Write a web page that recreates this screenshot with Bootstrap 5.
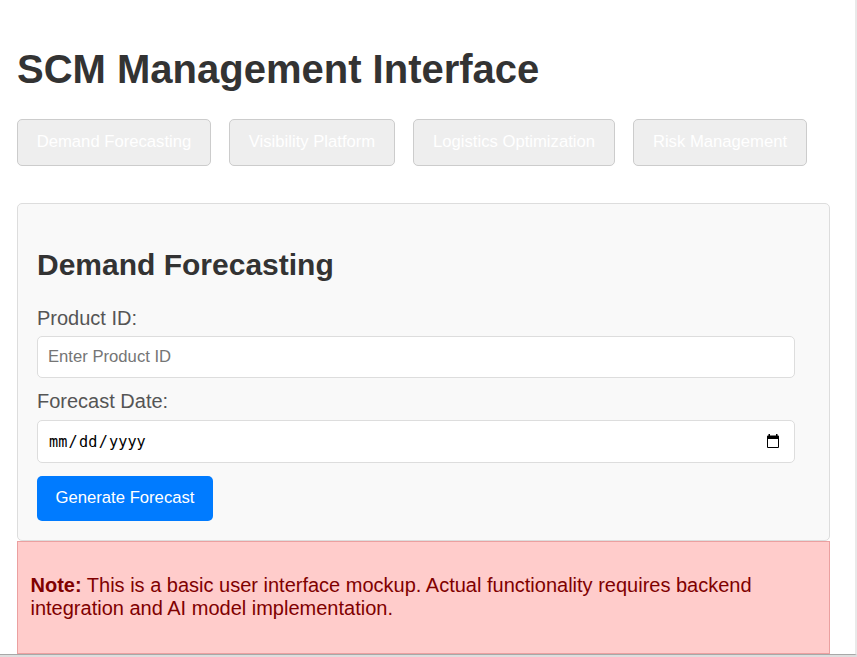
<!DOCTYPE html>
<html lang="en">
<head>
<meta charset="utf-8">
<meta name="viewport" content="width=device-width, initial-scale=1">
<title>SCM Management Interface</title>
<link href="https://cdn.jsdelivr.net/npm/bootstrap@5.3.0/dist/css/bootstrap.min.css" rel="stylesheet">
<style>
body{font-family:"Liberation Sans",Arial,sans-serif;font-size:20px;line-height:23px;color:#333;background:#fff}
.window{height:657px;border-bottom:2px solid #dedede}
.view{border-right:2px solid #e9e9e9;border-bottom:1px solid #a8a8a8;padding:46px 25px 0 17px}
h1{font-size:40px;line-height:46px;font-weight:700;color:#333}
h2{font-size:30px;line-height:36px;font-weight:700;color:#333}
.tabs{gap:18px;margin-top:27px}
.tabs .btn{height:47px;font-size:16.67px;line-height:19px;padding:0 0 3px;color:#fff;background:#eee;border:1px solid #ccc;border-radius:5px}
.w1{width:194px}.w2{width:166px}.w3{width:202px}.w4{width:174px}
.panel{height:338px;margin-top:37px;padding:43px 34px 0 19px;background:#f9f9f9;border:1px solid #ddd;border-radius:5px}
.panel label{color:#555;line-height:23px}
.panel .form-control{height:42px;font-size:16.67px;line-height:20px;padding:0 10px;border:1px solid #ddd;border-radius:5px;color:#000;background:#fff}
.form-control::placeholder{color:#757575}
.panel #product{margin-top:6px}
.panel .date-field{height:43px;margin-top:7px;padding:0 14px 0 11px}
.mono{font-family:"DejaVu Sans Mono",monospace;font-size:15.2px;gap:1.3px}
.btn-forecast{width:176px;height:45px;margin-top:13px;font-size:16.67px;line-height:19px;padding:0 0 3px;border:0;border-radius:5px;color:#fff;background:#007bff}
.note{height:113px;padding:32px 13px 0 12.5px;border:1px solid #eba0a0;background:#ffcccb;color:#800000}
</style>
</head>
<body>
<div class="window d-flex flex-column overflow-hidden">
  <main class="view flex-grow-1">
    <h1 class="m-0">SCM Management Interface</h1>
    <nav class="tabs d-flex">
      <button type="button" class="btn w1">Demand Forecasting</button>
      <button type="button" class="btn w2">Visibility Platform</button>
      <button type="button" class="btn w3">Logistics Optimization</button>
      <button type="button" class="btn w4">Risk Management</button>
    </nav>
    <section class="panel">
      <h2 class="m-0">Demand Forecasting</h2>
      <label class="d-block mt-4" for="product">Product ID:</label>
      <input id="product" type="text" class="form-control" placeholder="Enter Product ID">
      <label class="d-block mt-2 pt-1" for="forecast-date">Forecast Date:</label>
      <div id="forecast-date" class="form-control date-field d-flex align-items-center justify-content-between" tabindex="0">
        <span class="mono d-flex"><span>mm</span><span>/</span><span>dd</span><span>/</span><span>yyyy</span></span>
        <svg width="14" height="15" viewBox="0 0 14 15" aria-hidden="true"><path d="M2.5 0h1.500v1.500h6V0h1.500v1.500H12q1 0 1 1V13q0 1-1 1H2q-1 0-1-1V2.500q0-1 1-1h.5zM2 5v8h10V5z" fill="#000" fill-rule="evenodd"/></svg>
      </div>
      <button type="button" class="btn btn-forecast">Generate Forecast</button>
    </section>
    <div class="note"><p class="m-0"><strong>Note:</strong> This is a basic user interface mockup. Actual functionality requires backend integration and AI model implementation.</p></div>
  </main>
</div>
<script src="https://cdn.jsdelivr.net/npm/bootstrap@5.3.0/dist/js/bootstrap.bundle.min.js"></script>
</body>
</html>
